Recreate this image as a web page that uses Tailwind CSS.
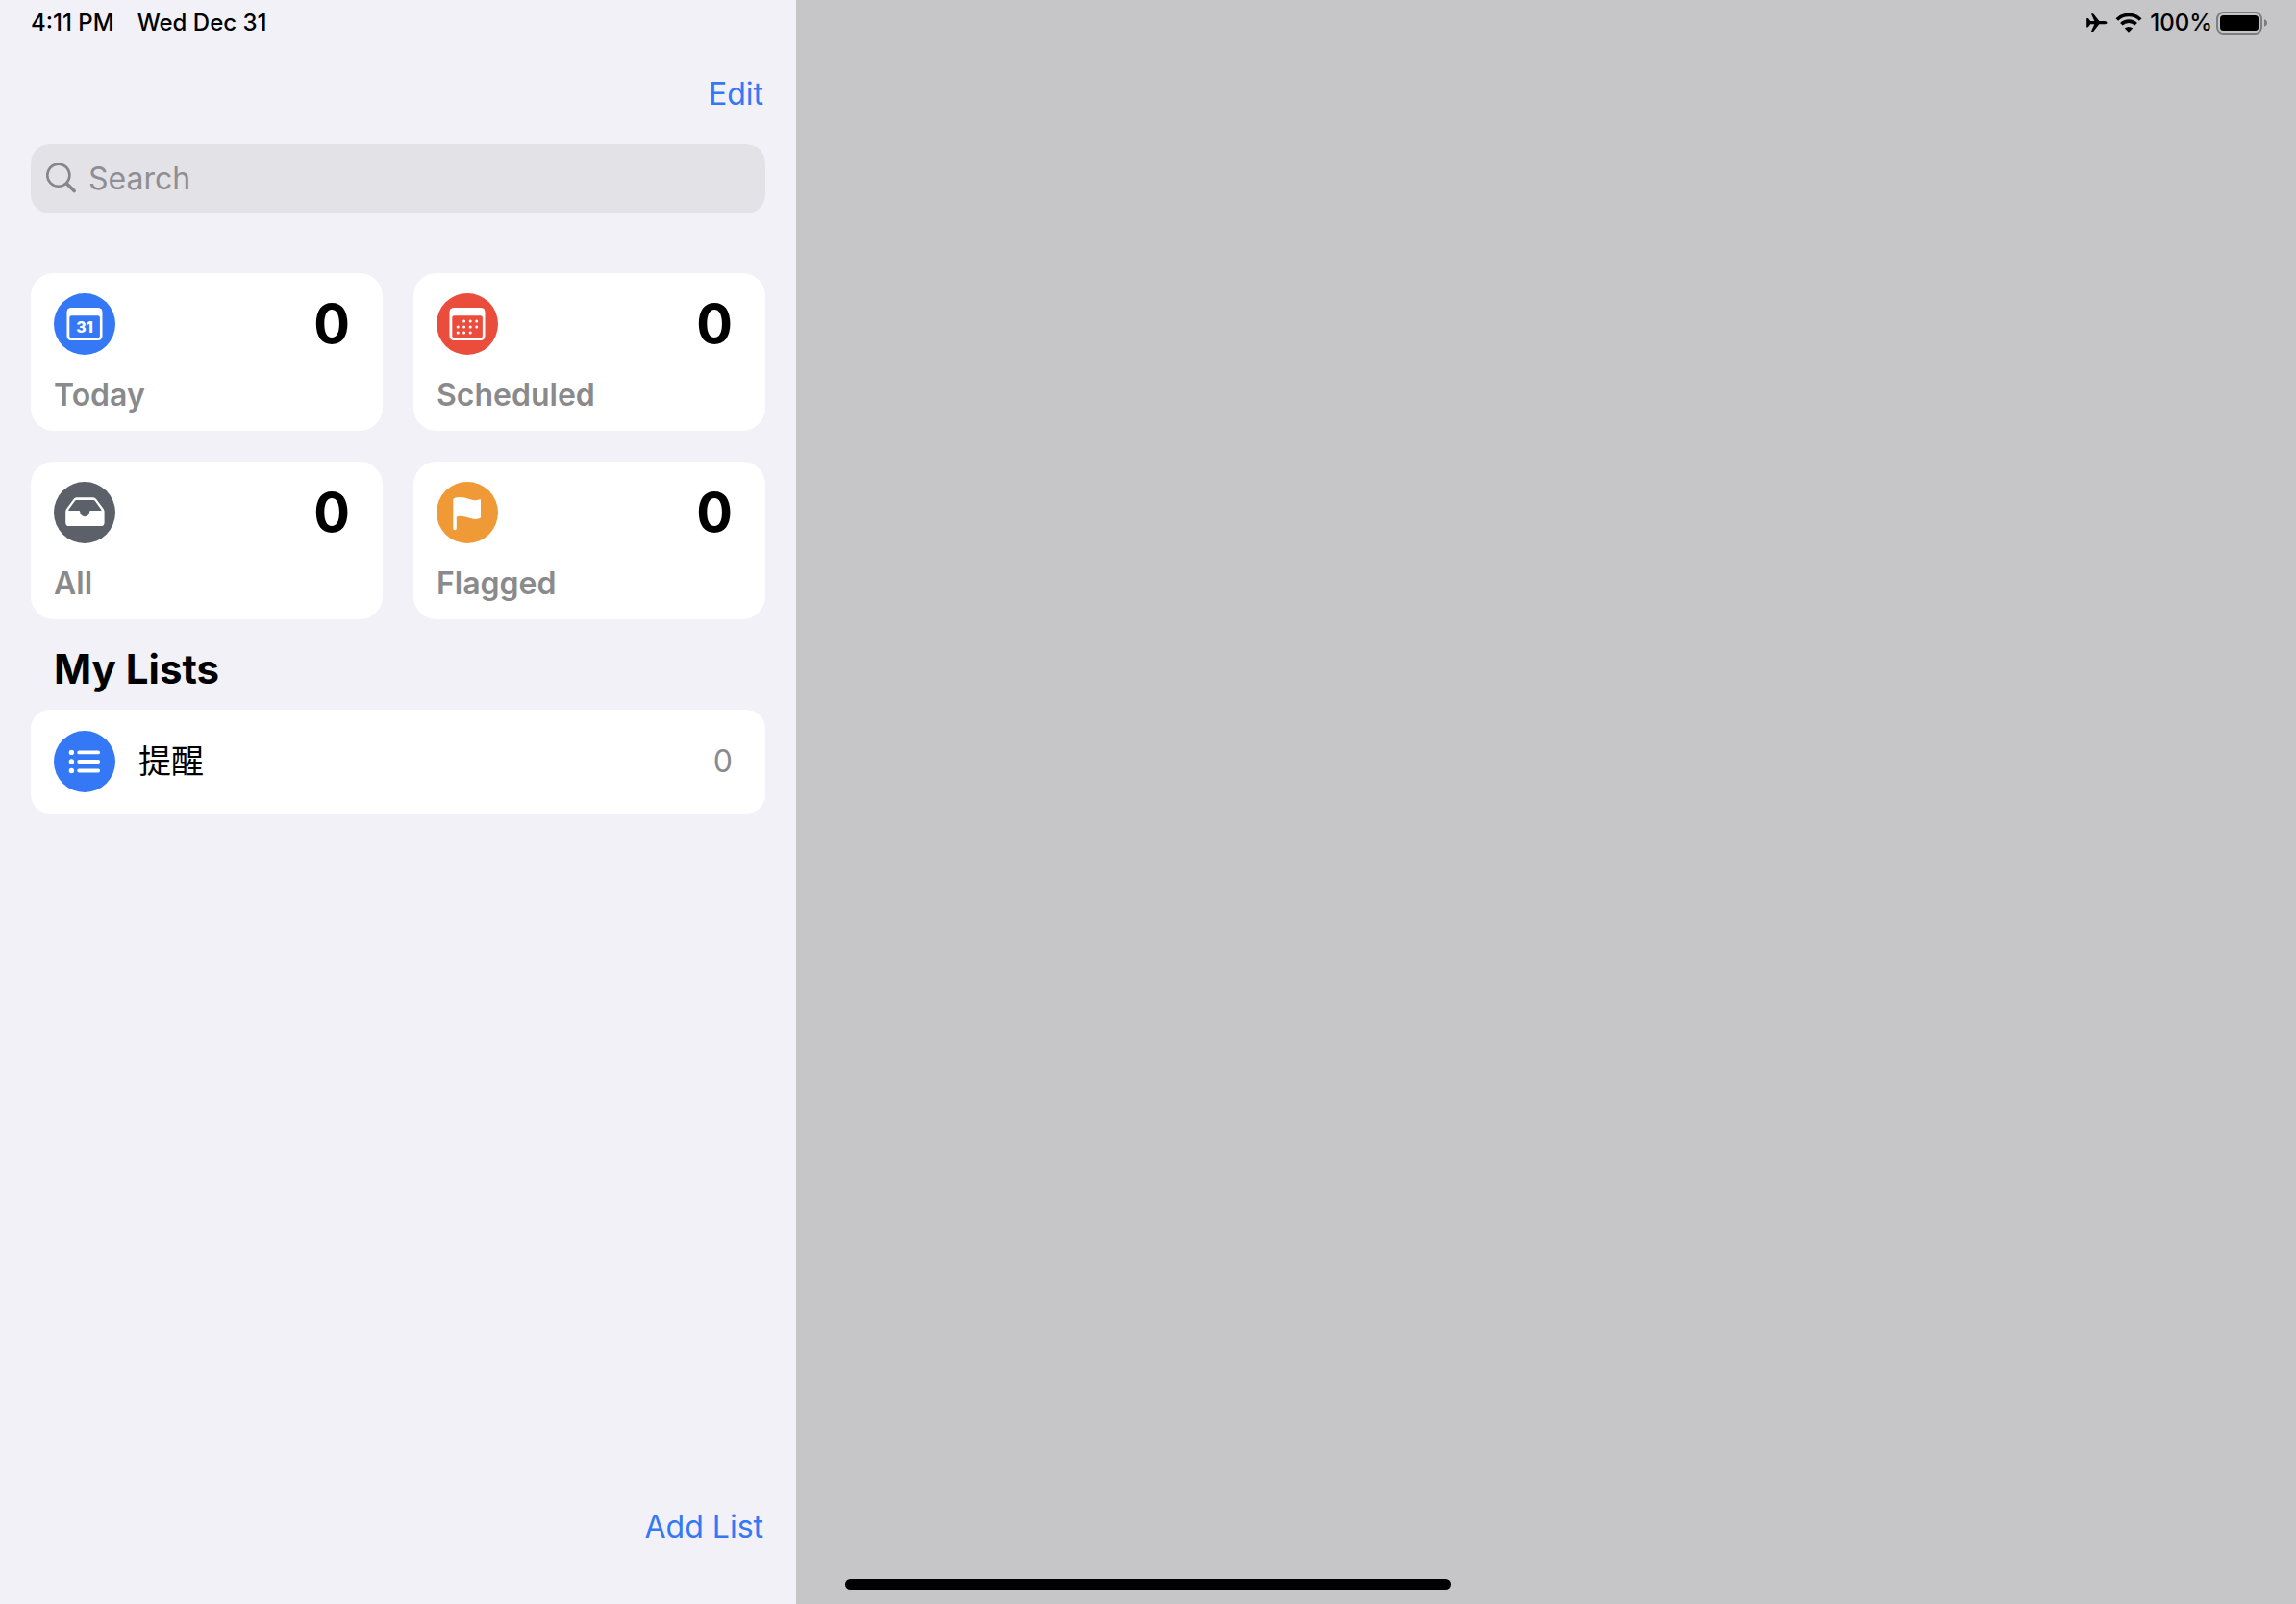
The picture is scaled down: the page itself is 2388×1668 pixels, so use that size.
<!DOCTYPE html>
<html lang="en">
<head>
<meta charset="utf-8">
<meta name="viewport" content="width=device-width, initial-scale=1">
<title>Reminders</title>
<script src="https://cdn.jsdelivr.net/npm/@tailwindcss/browser@4"></script>
</head>
<body class="relative flex min-h-screen bg-[#c6c6c8] font-['Inter','Noto_Sans_CJK_SC',sans-serif] text-[32px] leading-10 text-black">

  <aside class="flex w-[828px] shrink-0 flex-col bg-[#f2f1f7] px-8">
    <div class="flex h-12 items-center gap-6 text-2xl font-medium">
      <time>4:11 PM</time>
      <time>Wed Dec 31</time>
    </div>

    <div class="mt-[26px] flex h-12 justify-end pr-0.5">
      <button type="button" class="text-[#3478f6]">Edit</button>
    </div>

    <label class="mt-7 flex h-18 items-center gap-3 rounded-[20px] bg-[#e3e2e7] px-4">
      <svg class="size-8 shrink-0" viewBox="0 0 32 32" fill="none" stroke="#85858a" stroke-linecap="round" aria-hidden="true">
        <circle cx="12.8" cy="12.2" r="11.6" stroke-width="2.6"/>
        <path d="M21.5 20.9 29.2 28.6" stroke-width="3.6"/>
      </svg>
      <input type="search" aria-label="Search" placeholder="Search" class="min-w-0 flex-1 bg-transparent outline-none placeholder:text-[#8e8e93]">
    </label>

    <nav class="mt-[62px] grid grid-cols-2 gap-8" aria-label="Smart lists">
      <button type="button" class="flex flex-col gap-[22px] rounded-3xl bg-white pt-[21px] pr-[34px] pb-[17px] pl-6 text-left">
        <span class="flex w-full items-center justify-between">
          <svg class="size-16" viewBox="0 0 64 64" aria-hidden="true">
            <circle cx="32" cy="32" r="32" fill="#3478f6"/>
            <rect x="13.5" y="15" width="37" height="34" rx="4.5" fill="#fff"/>
            <rect x="16.3" y="23.3" width="31.6" height="23" rx="2" fill="#3478f6"/>
            <text x="32" y="41" text-anchor="middle" font-size="16" font-weight="800" fill="#fff">31</text>
          </svg>
          <span class="text-[56px] leading-16 font-bold">0</span>
        </span>
        <span class="font-semibold text-[#8a8a8c]">Today</span>
      </button>

      <button type="button" class="flex flex-col gap-[22px] rounded-3xl bg-white pt-[21px] pr-[34px] pb-[17px] pl-6 text-left">
        <span class="flex w-full items-center justify-between">
          <svg class="size-16" viewBox="0 0 64 64" aria-hidden="true">
            <circle cx="32" cy="32" r="32" fill="#eb4d3d"/>
            <rect x="13.5" y="15" width="37" height="34" rx="4.5" fill="#fff"/>
            <rect x="16.3" y="23.3" width="31.6" height="23" rx="2" fill="#eb4d3d"/>
            <path d="M28.6 29h.01M35.2 29h.01M41.7 29h.01M22.2 35h.01M28.6 35h.01M35.2 35h.01M41.7 35h.01M22.2 40.9h.01M28.6 40.9h.01M35.2 40.9h.01" stroke="#fff" stroke-width="3" stroke-linecap="round"/>
          </svg>
          <span class="text-[56px] leading-16 font-bold">0</span>
        </span>
        <span class="font-semibold text-[#8a8a8c]">Scheduled</span>
      </button>

      <button type="button" class="flex flex-col gap-[22px] rounded-3xl bg-white pt-[21px] pr-[34px] pb-[17px] pl-6 text-left">
        <span class="flex w-full items-center justify-between">
          <svg class="size-16" viewBox="0 0 64 64" aria-hidden="true">
            <circle cx="32" cy="32" r="32" fill="#5b6069"/>
            <path fill="#fff" fill-rule="evenodd" d="M23.6 16.3H41Q42.8 16.3 43.9 17.8L51.6 27.9Q52.6 29.3 52.6 31V42.4Q52.6 46.1 48.9 46.1H15.9Q12.2 46.1 12.2 42.4V31Q12.2 29.3 13.2 27.9L20.8 17.8Q21.9 16.3 23.6 16.3ZM23.5 19Q22.6 19 22 19.8L15.3 29.1Q14.9 30.1 15.9 30.1H26Q27.3 30.1 27.3 31.4A4.8 4.8 0 0 0 37 31.4Q37 30.1 38.3 30.1H48.8Q49.9 30.1 49.4 29.1L42.7 19.8Q42.1 19 41.2 19Z"/>
          </svg>
          <span class="text-[56px] leading-16 font-bold">0</span>
        </span>
        <span class="font-semibold text-[#8a8a8c]">All</span>
      </button>

      <button type="button" class="flex flex-col gap-[22px] rounded-3xl bg-white pt-[21px] pr-[34px] pb-[17px] pl-6 text-left">
        <span class="flex w-full items-center justify-between">
          <svg class="size-16" viewBox="0 0 64 64" aria-hidden="true">
            <circle cx="32" cy="32" r="32" fill="#f09a37"/>
            <path fill="#fff" d="M17.3 18.9Q17.3 17.6 18.4 17Q20.6 15.9 24 15.9C31 15.9 35.5 19.2 41 19.2C43 19.2 44 18.7 45 18.3Q46 18 46 19V36.6Q46 37.7 45 38.1C43.8 38.6 42.6 38.9 40.6 38.9C34.5 38.9 31 35.8 24.6 35.8Q22.6 35.8 20.8 36.5V48.5A1.7 1.7 0 0 1 17.3 48.5Z"/>
          </svg>
          <span class="text-[56px] leading-16 font-bold">0</span>
        </span>
        <span class="font-semibold text-[#8a8a8c]">Flagged</span>
      </button>
    </nav>

    <h2 class="mt-7 mb-[18px] px-6 text-[42px] leading-12 font-bold">My Lists</h2>

    <ul>
      <li>
        <button type="button" class="flex w-full items-center gap-6 rounded-[20px] bg-white py-[22px] pr-[34px] pl-6 text-left">
          <svg class="size-16 shrink-0" viewBox="0 0 64 64" aria-hidden="true">
            <circle cx="32" cy="32" r="32" fill="#3478f6"/>
            <g fill="#fff"><circle cx="18.4" cy="22.4" r="2.7"/><circle cx="18.4" cy="32" r="2.7"/><circle cx="18.4" cy="41.5" r="2.7"/></g>
            <path d="M26.2 22.4H46.2M26.2 32H46.2M26.2 41.5H46.2" stroke="#fff" stroke-width="3.8" stroke-linecap="round"/>
          </svg>
          <span class="flex-1 text-[34px]" lang="zh">提醒</span>
          <span class="text-[#8a8a8c]">0</span>
        </button>
      </li>
    </ul>

    <div class="mt-auto flex justify-end pr-0.5 pb-15">
      <button type="button" class="text-[#3478f6]">Add List</button>
    </div>
  </aside>

  <main class="min-w-0 flex-1">
    <div class="flex h-12 items-center justify-end pr-[29px] text-2xl font-medium">
      <svg class="mr-2 h-5 w-[22px]" viewBox="0 0 22 20" role="img" aria-label="Airplane mode">
        <path d="M21.6 9.7C21.6 8.6 19.6 8.1 18 8.1H13.3L7.6.8Q7.2.3 6.6.3H5.4Q4.9.3 5.1.8L8.3 8.1H4.2L2.1 5.3Q1.8 4.9 1.3 4.9H.6Q.2 4.9.2 5.4V14Q.2 14.5.6 14.5H1.3Q1.8 14.5 2.1 14.1L4.2 11.3H8.3L5.1 18.6Q4.9 19.1 5.4 19.1H6.6Q7.2 19.1 7.6 18.6L13.3 11.3H18C19.6 11.3 21.6 10.8 21.6 9.7Z"/>
      </svg>
      <svg class="mr-2 h-5 w-7" viewBox="0 0 28 20" role="img" aria-label="Wi-Fi">
        <path d="M1.8 6.5A17.3 17.3 0 0 1 26.2 6.5M6.4 11.2A10.8 10.8 0 0 1 21.6 11.2" fill="none" stroke="#000" stroke-width="3.7"/>
        <path d="M14 19.8 9.8 15.6A6 6 0 0 1 18.2 15.6Z"/>
      </svg>
      <span class="mr-1">100%</span>
      <svg class="h-6 w-[54px]" viewBox="0 0 54 24" role="img" aria-label="Battery full">
        <rect x="1" y="1" width="46" height="22" rx="6.5" fill="none" stroke="#7c7c7e" stroke-width="1.9"/>
        <rect x="4" y="4" width="40" height="16" rx="3.5"/>
        <path d="M50 8.3Q53 9.3 53 12T50 15.7Z" fill="#7c7c7e"/>
      </svg>
    </div>
  </main>

  <!-- Home indicator floats over both columns -->
  <div class="absolute bottom-[15px] left-1/2 h-[11px] w-[630px] -translate-x-1/2 rounded-full bg-black"></div>
</body>
</html>
